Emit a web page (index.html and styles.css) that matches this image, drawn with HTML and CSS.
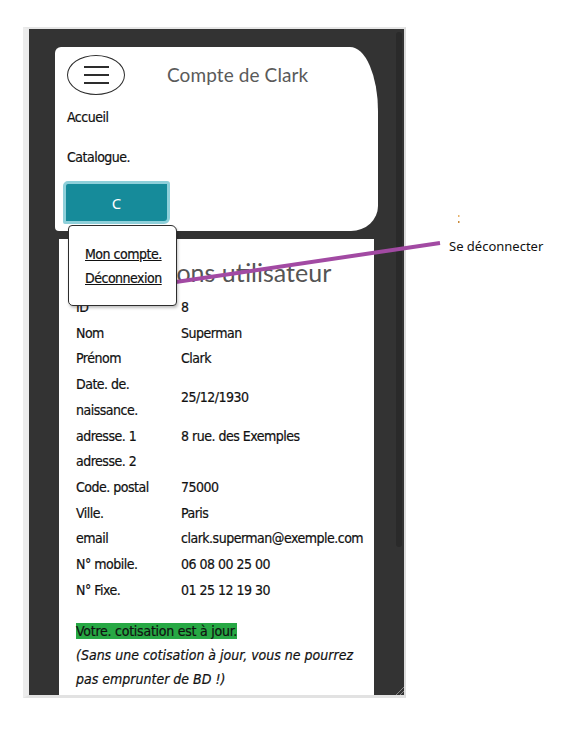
FILE: index.html
```html
<!DOCTYPE html>
<html lang="fr">
<head>
<meta charset="utf-8">
<title>Compte de Clark</title>
<link rel="stylesheet" href="styles.css">
</head>
<body>
<div class="frame">
  <div class="screen">
    <header class="topcard">
      <div class="toprow">
        <button class="burger" aria-label="menu">
          <span></span><span></span><span></span>
        </button>
        <h1 class="title">Compte de Clark</h1>
      </div>
      <nav class="nav">
        <a class="navlink">Accueil</a>
        <a class="navlink">Catalogue.</a>
      </nav>
      <div class="userwrap">
        <button class="userbtn">C</button>
        <div class="dropdown">
          <a class="ddlink">Mon compte.</a>
          <a class="ddlink">Déconnexion</a>
        </div>
      </div>
    </header>
    <main class="card">
      <h2 class="heading">Informations utilisateur</h2>
      <div class="info">
        <div class="lbl">ID</div><div class="val">8</div>
        <div class="lbl">Nom</div><div class="val">Superman</div>
        <div class="lbl">Prénom</div><div class="val">Clark</div>
        <div class="lbl">Date. de. naissance.</div><div class="val">25/12/1930</div>
        <div class="lbl">adresse. 1</div><div class="val">8 rue. des Exemples</div>
        <div class="lbl">adresse. 2</div><div class="val"></div>
        <div class="lbl">Code. postal</div><div class="val">75000</div>
        <div class="lbl">Ville.</div><div class="val">Paris</div>
        <div class="lbl">email</div><div class="val">clark.superman@exemple.com</div>
        <div class="lbl">N° mobile.</div><div class="val">06 08 00 25 00</div>
        <div class="lbl">N° Fixe.</div><div class="val">01 25 12 19 30</div>
      </div>
      <p class="status"><span class="ok">Votre. cotisation est à jour.</span><br><em>(Sans une cotisation à jour, vous ne pourrez pas emprunter de BD !)</em></p>
    </main>
  </div>
  <div class="track"><div class="thumb"></div><div class="grip"></div></div>
</div>
<svg class="arrow" width="564" height="735" viewBox="0 0 564 735"><line x1="169" y1="283" x2="440" y2="243" stroke="#a24aa3" stroke-width="4"/><rect x="458" y="215" width="1.5" height="2" fill="#e8b36a"/><rect x="458" y="221" width="1.5" height="2" fill="#c98a3a"/></svg>
<div class="note">Se déconnecter</div>
</body>
</html>
```
FILE: styles.css
```css
html, body { margin: 0; padding: 0; background: #fff; }
body {
  width: 564px; height: 735px; position: relative; overflow: hidden;
  font-family: "DejaVu Sans Condensed", "DejaVu Sans", sans-serif;
  font-size: 14px; letter-spacing: -0.5px;
  color: #111;
}

.frame {
  display: flex;
  width: 375px;
  height: 666px;
  margin: 27px 0 0 23px;
  background: #333;
  border-left: 6px solid #ececec;
  border-top: 2px solid #e6e6e6;
  border-right: 2px solid #dcdcdc;
  border-bottom: 3px solid #e2e2e2;
  overflow: hidden;
}
.screen { width: 367px; padding: 18px 18px 0 26px; box-sizing: border-box; display: flex; flex-direction: column; }
.track { width: 8px; position: relative; }
.thumb { margin: 3px 2px 0 0; width: 6px; height: 515px; background: #2a2a2a; border-radius: 3px; }
.grip { position: absolute; right: 0; bottom: 0; width: 10px; height: 10px;
  background: repeating-linear-gradient(135deg, transparent 0 2px, #888 2px 3px); clip-path: polygon(100% 0, 100% 100%, 0 100%); }

.topcard {
  background: #fff;
  border-radius: 6px 28px 27px 4px / 6px 64px 25px 4px;
  padding: 8px 12px 7px 12px;
  display: flex;
  flex-direction: column;
  align-items: flex-start;
  flex: none;
}
.toprow { display: flex; align-items: center; height: 40px; }
.burger {
  width: 58px; height: 40px; box-sizing: border-box;
  border: 1.6px solid #2d2d2d; border-radius: 50%;
  background: #fff; padding: 0;
  display: flex; flex-direction: column; align-items: center; justify-content: center; gap: 6.3px;
}
.burger span { display: block; width: 25px; height: 1.6px; background: #2d2d2d; }
.title { margin: 0 0 0 42px; font: 400 19px/24px Lato, "Open Sans", sans-serif; letter-spacing: 0.1px; color: #5a5a5a; }

.nav { display: flex; flex-direction: column; gap: 20px; margin-top: 12px; }
.navlink { line-height: 20px; -webkit-text-stroke: 0.2px #111; }

.userwrap { position: relative; margin: 14px 0 0 -4px; }
.userbtn {
  width: 107px; height: 43px; box-sizing: border-box;
  border: 3px solid #8fd0da; border-radius: 5px 3px 6px 2px;
  background: #168b9a; color: #fff;
  font: 15px "Noto Sans", sans-serif; padding: 0;
}
.dropdown {
  position: absolute; left: 5px; top: 44px; z-index: 2;
  width: 109px; height: 81px; box-sizing: border-box;
  background: #fff; border: 1.6px solid #2d2d2d; border-radius: 4px 6px 4px 5px;
  box-shadow: 1px 2px 3px rgba(0,0,0,0.25);
  padding: 19px 0 0 16px;
  display: flex; flex-direction: column; gap: 6px;
}
.ddlink { line-height: 18px; text-decoration: underline; -webkit-text-stroke: 0.2px #111; }

.card { background: #fff; margin: 8px 4px 0 4px; padding: 18px 17px 0 17px; flex: 1; }
.heading { margin: 0; padding-left: 0; text-align: left; font: 400 25px/30px Lato, "Open Sans", sans-serif; letter-spacing: 0; color: #555; white-space: nowrap; }
.info { display: grid; grid-template-columns: 105px 1fr; align-items: center; margin-top: 8px; line-height: 25.7px; -webkit-text-stroke: 0.2px #111; }
.status { margin: 16px 0 0 0; line-height: 24px; -webkit-text-stroke: 0.2px #111; }
.ok { background: #27a844; letter-spacing: -0.25px; }
.status em { font-style: italic; letter-spacing: 0; }

.arrow { position: absolute; left: 0; top: 0; pointer-events: none; }
.note { position: absolute; left: 449px; top: 237px; font: 13px/18px "Noto Sans", sans-serif; letter-spacing: 0; color: #111; }
```
